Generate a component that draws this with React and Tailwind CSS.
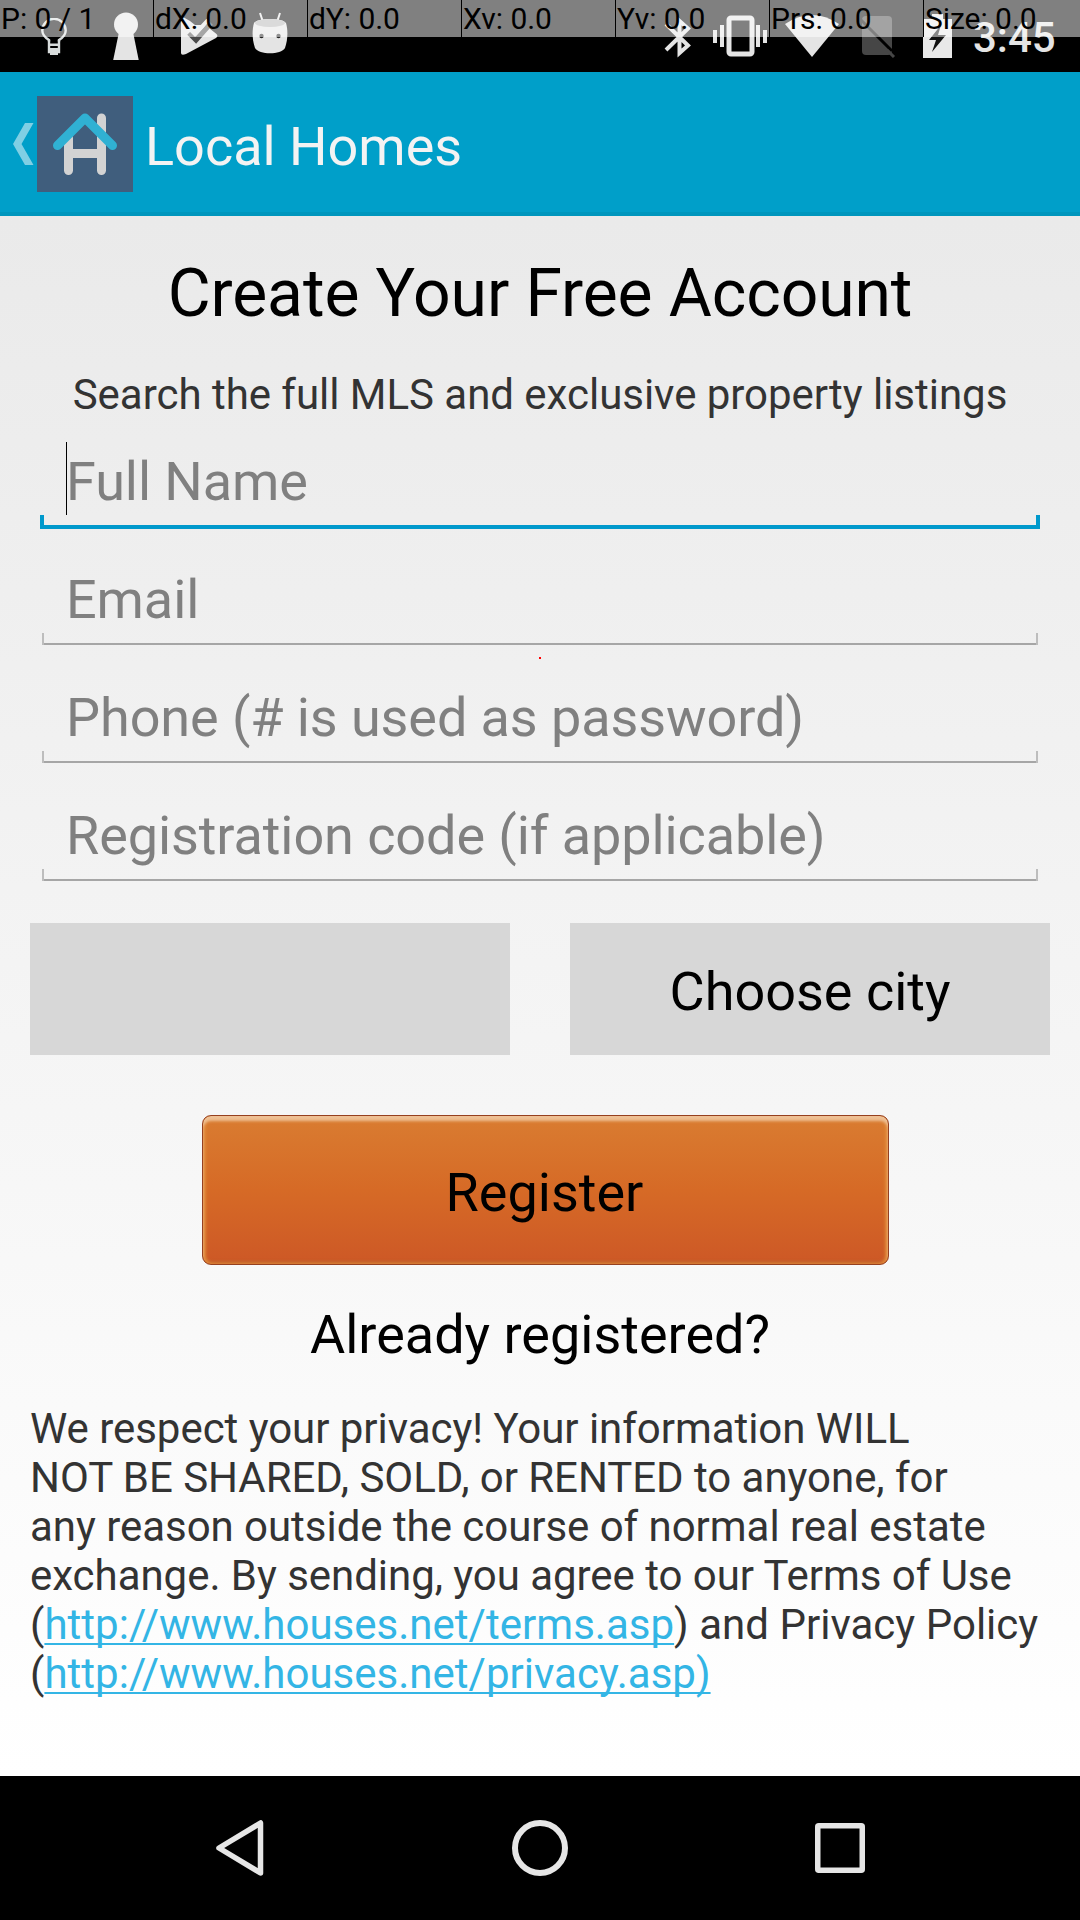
import React from "react";

const DEBUG = ["P: 0 / 1", "dX: 0.0", "dY: 0.0", "Xv: 0.0", "Yv: 0.0", "Prs: 0.0", "Size: 0.0"];

function Bulb() {
  return (
    <svg className="w-7 h-[38px] ml-10 mt-[18px] shrink-0" viewBox="0 0 28 38" fill="none" stroke="#d8dcdc" strokeWidth="2.4">
      <path d="M9 23.5 V22 C5 19.500 2.300 17 2.300 12.500 A11.700 11.700 0 0 1 25.700 12.500 C25.700 17 23 19.500 19 22 V23.500" />
      <path d="M9 22v12h10v-12M9 26.700h10" />
      <path d="M8 31.500h12M10 35.500h8" strokeWidth="3" />
    </svg>
  );
}

function Keyhole() {
  return (
    <svg className="w-[26px] h-12 ml-[45px] mt-[12px] shrink-0" viewBox="0 0 26 48" fill="#e4e4e4">
      <circle cx="13" cy="12.500" r="12" />
      <path d="M6 20h14l5.700 28h-25.500z" />
    </svg>
  );
}

function PlayCheck() {
  return (
    <svg className="w-[38px] h-[40px] ml-[42px] mt-[16px] shrink-0" viewBox="0 0 38 40">
      <path d="M0 0L2 1L9 5L14 9L24 9L28 12L35.500 18Q37.500 20 35 22L5 38Q0 40 0 37z" fill="#e4e4e4" />
      <path d="M8 17l7 7L30 7" fill="none" stroke="#4a4a4a" strokeWidth="5" />
      <path d="M8 12l6 6L27 4" fill="none" stroke="#e4e4e4" strokeWidth="4" />
    </svg>
  );
}

function Droid() {
  return (
    <svg className="w-[36px] h-[42px] ml-[33px] mt-[12px] shrink-0" viewBox="0 0 36 42">
      <path d="M8 1l3 9M28 1l-3 9" stroke="#e4e4e4" strokeWidth="2" />
      <path d="M2 11C5 5.500 31 5.500 34 11C36 18 36 27 33 36C29 43 7 43 3 36C0 27 0 18 2 11z" fill="#e4e4e4" />
      <ellipse cx="18" cy="11" rx="15" ry="4" fill="#b4b4b4" />
      <circle cx="9.500" cy="24" r="2.200" fill="#222" />
      <circle cx="26.500" cy="24" r="2.200" fill="#222" />
    </svg>
  );
}

function StatusBar() {
  return (
    <div className="relative h-[72px] bg-black flex items-start">
      <Bulb />
      <Keyhole />
      <PlayCheck />
      <Droid />
      <div className="flex-1" />
      <svg className="w-[28px] h-[42px] mt-4 mr-[20px] shrink-0" viewBox="0 0 28 42" fill="none" stroke="#e4e4e4" strokeWidth="4">
        <path d="M2 8L24 29.500L15.500 37V5L24 12.500L2 34" />
      </svg>
      <svg className="w-[56px] h-[42px] mt-[15px] mr-[16px] shrink-0" viewBox="0 0 56 42" fill="#e4e4e4">
        <path d="M1 15h4v13h-4zM8 10h4v22h-4zM44 10h4v22h-4zM51 15h4v13h-4z" />
        <rect x="17" y="3" width="23" height="36" rx="2" fill="none" stroke="#e4e4e4" strokeWidth="5" />
      </svg>
      <svg className="w-[56px] h-[42px] mt-[15px] mr-[21px] shrink-0" viewBox="0 0 56 42" fill="#e4e4e4">
        <path d="M1 9Q28 -9 55 9L28 42z" />
      </svg>
      <svg className="w-[36px] h-[42px] mt-4 mr-[26px] shrink-0" viewBox="0 0 36 42">
        <rect x="1" y="0" width="30" height="39" rx="4" fill="#464646" />
        <path d="M0 4L31 35" stroke="#000000" strokeWidth="3" />
        <path d="M26 34L33 41" stroke="#464646" strokeWidth="3" />
      </svg>
      <svg className="w-[29px] h-[44px] mt-[14px] mr-[21px] shrink-0" viewBox="0 0 29 44">
        <path d="M0 5H9V0H20V5H29V44H0z" fill="#e8e8e8" />
        <path d="M18 11L6 26H13L9 38L23 21H15z" fill="#111" />
      </svg>
      <div className="w-[107px] mt-[13px] text-[42px] leading-[49px] font-medium text-[#e4e4e4] shrink-0">3:45</div>
      <div className="absolute inset-x-0 top-0 h-[37px] flex bg-white/50 text-black text-[30px] leading-[35px] tracking-[-0.05px]">
        {DEBUG.map((t, i) => (
          <div key={t} className={i < 6 ? "w-[154px] border-r border-black pl-px pt-px whitespace-nowrap" : "flex-1 pl-px pt-px whitespace-nowrap"}>{t}</div>
        ))}
      </div>
    </div>
  );
}

function Header() {
  return (
    <div className="h-36 bg-[#009fc9] border-b-4 border-[#0096bd] flex items-start">
      <svg className="w-[21px] h-[42px] ml-[13px] mt-[51px]" viewBox="0 0 21 42">
        <path d="M12 0H20.500L8.500 21L20.500 42H12L0 21z" fill="#80cfe4" />
      </svg>
      <svg className="w-24 h-24 ml-[3px] mt-6" viewBox="0 0 96 96" fill="none" strokeLinecap="round" strokeWidth="9">
        <rect width="96" height="96" fill="#405e7d" />
        <path d="M31.500 42V74.500M64.500 22V74.500M31.500 57.500H64.500" stroke="#d3d3d3" />
        <path d="M20.500 49.500L48 22L75.500 49.500" stroke="#30b1d3" strokeLinejoin="round" />
      </svg>
      <div className="ml-3 mt-[43px] text-[54px] leading-[63px] text-[#f3f3f3]">Local Homes</div>
    </div>
  );
}

function Field({ label, active }) {
  return (
    <div className="h-[118px] pt-[39px] relative">
      <div className="pl-[66px] text-[54px] leading-[63px] tracking-[-0.09px] text-[#808080]">{label}</div>
      {active ? (
        <>
          <div className="absolute left-[66px] top-[31px] w-px h-[73px] bg-black" />
          <div className="absolute left-10 right-10 bottom-0 h-[14px] border-4 border-t-0 border-[#0099cc]" />
        </>
      ) : (
        <div className="absolute left-[42px] right-[42px] bottom-[2px] h-3 border-x-2 border-[#bdbdbd] flex items-end">
          <div className="h-[2px] w-full bg-[#a6a6a6]" />
        </div>
      )}
    </div>
  );
}

export default function App() {
  return (
    <div className="w-[1080px] h-[1920px] overflow-hidden flex flex-col font-['Roboto',sans-serif]">
      <StatusBar />
      <Header />
      <main className="h-[1560px] bg-linear-to-b from-[#eaeaea] to-white flex flex-col relative">
        <h1 className="mt-[39px] text-center text-[66px] leading-[77px] tracking-[-0.09px] text-black">Create Your Free Account</h1>
        <p className="mt-[38px] text-center text-[42px] leading-[49px] tracking-[-0.03px] text-[#333333] whitespace-nowrap">Search the full MLS and exclusive property listings</p>
        <div className="-mt-2">
          <Field label="Full Name" active />
          <Field label="Email" />
          <Field label="Phone (# is used as password)" />
          <Field label="Registration code (if applicable)" />
        </div>
        <div className="absolute left-[539px] top-[441px] w-[2px] h-[2px] bg-[#ff0000]" />
        <div className="mt-10 px-[30px] flex gap-[60px] h-[132px] text-[54px]">
          <button className="flex-1 bg-[#d7d7d7]" aria-label="State" />
          <button className="flex-1 bg-[#d7d7d7] text-black pt-1">Choose city</button>
        </div>
        <button className="ml-[202px] mt-[60px] w-[687px] h-[150px] rounded-[9px] border border-[#96401f] bg-linear-to-b from-[#d97c31] via-[#d66a26] to-[#cd5826] shadow-[inset_0_5px_3px_#efc094,inset_3px_0_3px_#e08838,inset_-3px_0_3px_#e08838,inset_0_-3px_3px_#c4662f] text-[54px] leading-[63px] text-black pt-1 pr-0.5">Register</button>
        <div className="mt-[38px] text-center text-[54px] leading-[63px] text-black">Already registered?</div>
        <p className="mt-[38px] pl-[30px] text-[42px] leading-[49px] text-[#333333] whitespace-nowrap">
          <span className="tracking-[-0.04px]">
            We respect your privacy! Your information WILL<br />
            NOT BE SHARED, SOLD, or RENTED to anyone, for<br />
            any reason outside the course of normal real estate<br />
            exchange. By sending, you agree to our Terms of Use<br />
          </span>
          <span className="tracking-[0.02px]">
            (<a className="text-[#33b5e5] underline decoration-2 underline-offset-[4px] [text-decoration-skip-ink:none]">http://www.houses.net/terms.asp</a>) and Privacy Policy<br />
            (<a className="text-[#33b5e5] underline decoration-2 underline-offset-[4px] [text-decoration-skip-ink:none]">http://www.houses.net/privacy.asp)</a>
          </span>
        </p>
      </main>
      <nav className="h-36 bg-black flex items-center justify-between pl-[215px] pr-[215px]">
        <svg className="w-[50px] h-[58px]" viewBox="0 0 50 58" fill="none" stroke="#e6e6e6" strokeWidth="5.500" strokeLinejoin="round">
          <path d="M45.500 4V54L4 29z" />
        </svg>
        <svg className="w-[58px] h-[58px]" viewBox="0 0 58 58" fill="none" stroke="#e6e6e6" strokeWidth="6">
          <circle cx="29" cy="29" r="25" />
        </svg>
        <svg className="w-[50px] h-[50px]" viewBox="0 0 50 50" fill="none" stroke="#e6e6e6" strokeWidth="5.500">
          <rect x="2.750" y="2.750" width="44.500" height="44.500" rx="1" />
        </svg>
      </nav>
    </div>
  );
}
